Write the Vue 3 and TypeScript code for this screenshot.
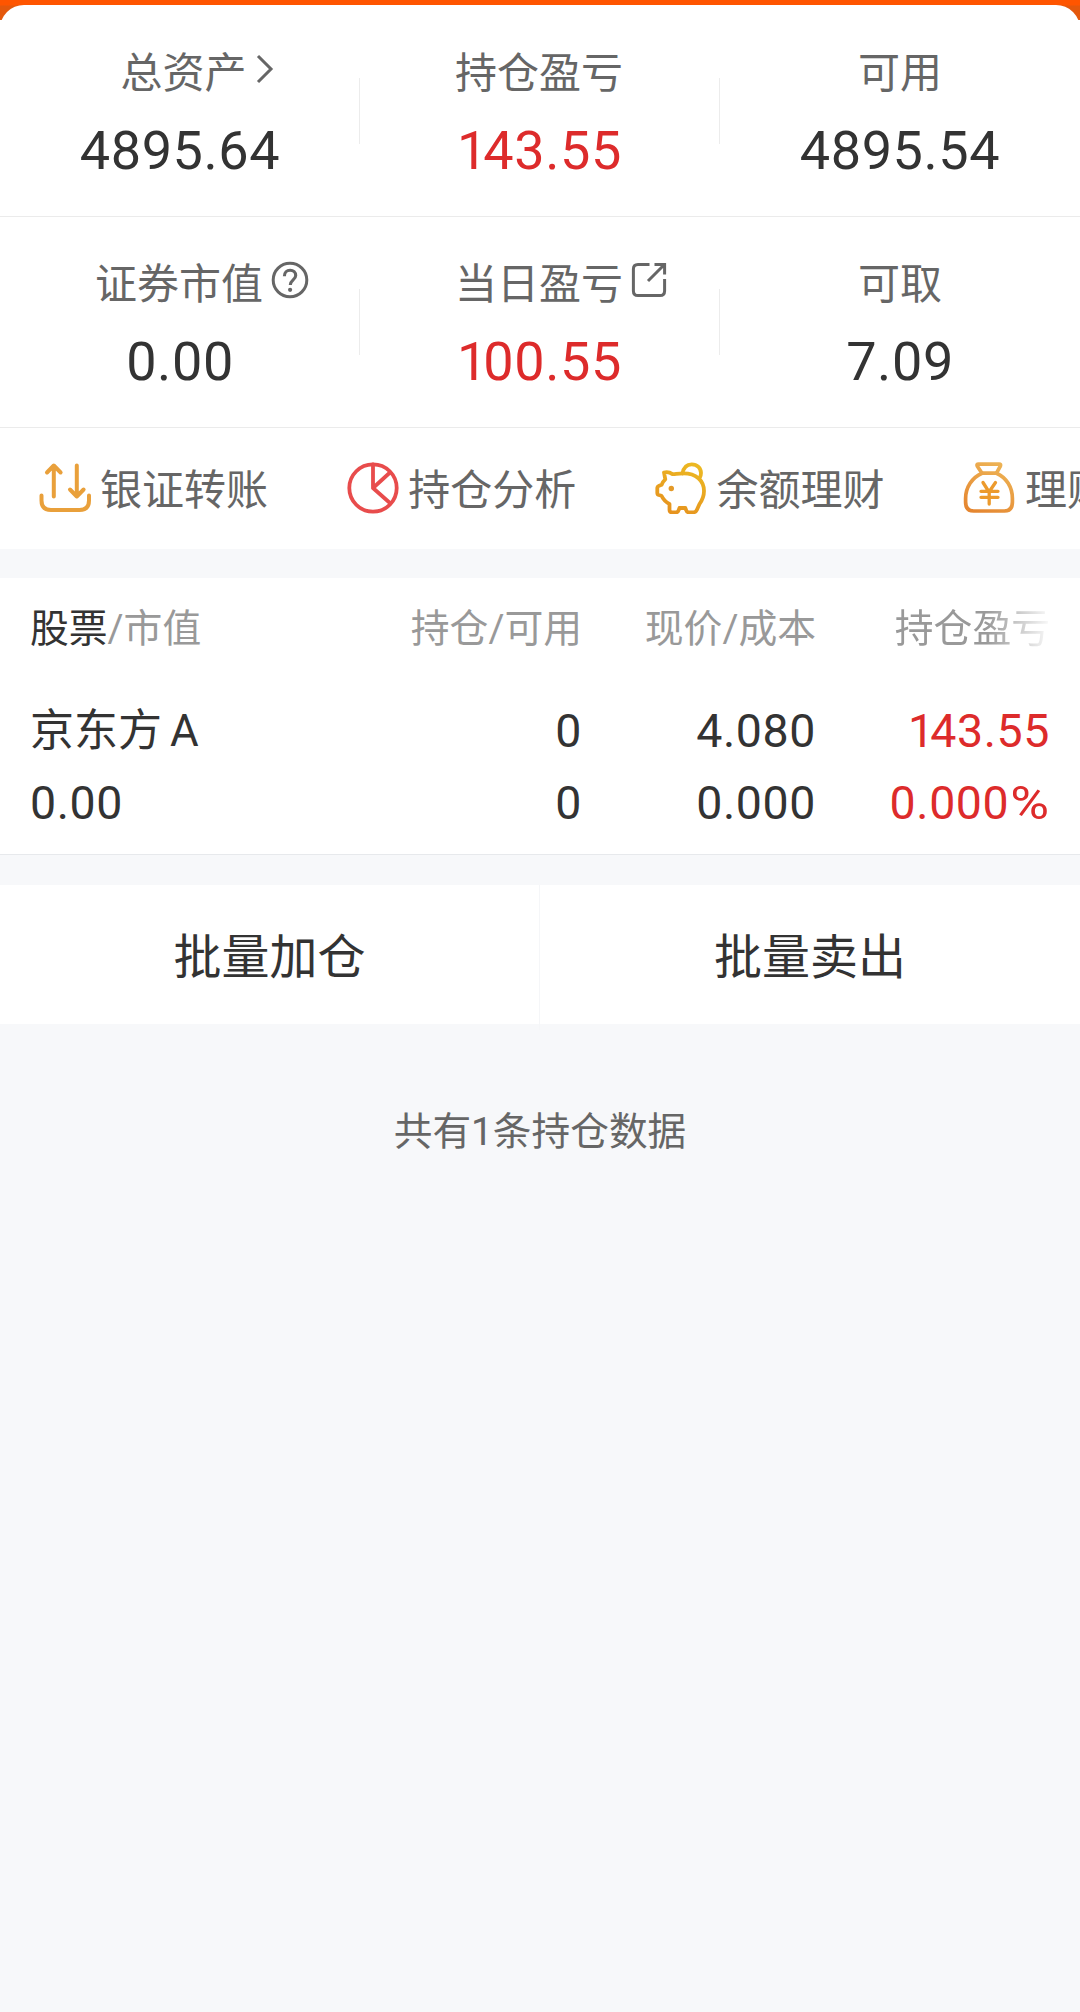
<script setup lang="ts">
interface Metric {
  label: string
  value: string
  up?: boolean
  icon?: 'arrow' | 'help' | 'open'
}

interface Action {
  label: string
  icon: 'transfer' | 'pie' | 'pig' | 'bag'
}

const metricRows: Metric[][] = [
  [
    { label: '总资产', value: '4895.64', icon: 'arrow' },
    { label: '持仓盈亏', value: '143.55', up: true },
    { label: '可用', value: '4895.54' },
  ],
  [
    { label: '证券市值', value: '0.00', icon: 'help' },
    { label: '当日盈亏', value: '100.55', up: true, icon: 'open' },
    { label: '可取', value: '7.09' },
  ],
]

const actions: Action[] = [
  { label: '银证转账', icon: 'transfer' },
  { label: '持仓分析', icon: 'pie' },
  { label: '余额理财', icon: 'pig' },
  { label: '理财', icon: 'bag' },
]

const holdings = [
  { name: '京东方 A', value: '0.00', held: '0', usable: '0', price: '4.080', cost: '0.000', profit: '143.55', rate: '0.000' },
]

// A leading 1 sits closer to the digit that follows
const isNarrow = (value: string): boolean => value.startsWith('1')
</script>

<template>
  <main class="page">
    <div class="top">
      <section class="card">
        <div v-for="(row, r) in metricRows" :key="r" class="metrics">
          <div v-for="m in row" :key="m.label" class="metric">
            <div class="metric-label" :class="{ shifted: m.icon === 'arrow' }">
              <span class="label-text">
                {{ m.label }}
                <svg v-if="m.icon === 'arrow'" class="ico-arrow" width="18" height="30" viewBox="0 0 18 30">
                  <path d="M2 2 15 15 2 28" />
                </svg>
                <svg v-else-if="m.icon === 'help'" class="ico-help" width="38" height="38" viewBox="0 0 38 38">
                  <circle cx="19" cy="19" r="16.8" />
                  <path d="M13.4 15.2c0-3.8 2.4-6 5.7-6s5.6 2.1 5.6 5.3c0 4.4-5.4 4.6-5.4 9.6" stroke-width="3.1" />
                  <circle class="dot" cx="19.1" cy="28.8" r="2.1" />
                </svg>
                <svg v-else-if="m.icon === 'open'" class="ico-open" width="36" height="36" viewBox="0 0 36 36">
                  <path d="M18.5 2.4H7Q2.4 2.4 2.4 7v22q0 4.6 4.6 4.6h22q4.6 0 4.6-4.6V17" />
                  <path d="M17 19 33.2 2.8M23.5 2.4h10.1v10.2" />
                </svg>
              </span>
            </div>
            <div class="metric-value" :class="{ up: m.up, narrow: isNarrow(m.value) }">{{ m.value }}</div>
          </div>
        </div>
      </section>
    </div>

    <nav class="actions">
      <div v-for="a in actions" :key="a.label" class="action">
        <svg v-if="a.icon === 'transfer'" class="a-ico" viewBox="0 0 52 52" stroke="#e9a03b" stroke-width="4">
          <path d="M2.5 33.5v5Q2.5 48 12 48h28.5q9.5 0 9.5-9.5v-5" />
          <path d="M14.8 34.5V4M8 10.500l6.800-7 6.800 7M37.800 3.500v31M31 27.500l6.800 7 6.800-7" />
        </svg>
        <svg v-else-if="a.icon === 'pie'" class="a-ico" viewBox="0 0 52 52" stroke="#e84c4c" stroke-width="3.800">
          <circle cx="26" cy="26" r="23.700" />
          <path d="M26 2.500V26L43 10.500M26 26l17.500 15.500" />
        </svg>
        <svg v-else-if="a.icon === 'pig'" class="a-ico left" viewBox="0 0 52 52" stroke="url(#gold)" stroke-width="3.800">
          <defs>
            <linearGradient id="gold" gradientUnits="userSpaceOnUse" x1="38" y1="2" x2="16" y2="50">
              <stop offset="0" stop-color="#ecb822" />
              <stop offset="1" stop-color="#e6931f" />
            </linearGradient>
          </defs>
          <path d="M27.500 11.500C28.500 5.500 32 2.300 36.700 2.300c5.500 0 9.300 4 9.300 8.700 0 2-.4 3.200-1.200 4.600" />
          <path d="M9 10.500c3-.9 5.500-.5 8.500 1.600 2.500.4 4.500-.8 11-.8C41 11.300 49 18.500 49 29c0 5.500-2 9.500-4.500 13l-2.700 6q-1 2.300-3.500 2.300h-4.500q-2 0-2.600-2l-.8-2.300h-6l-.8 2.300q-.6 2-2.600 2h-4q-2.500 0-2.500-2.500v-5.800C10.500 40 8 37 6.500 33.800L3.800 33Q2.300 32.500 2.300 31v-5.200q0-1.300 1.300-1.800l3-1.200c.8-2.300 2-4 3.700-5.500z" />
          <circle cx="16.300" cy="26.500" r="2.700" fill="#e49a28" stroke="none" />
        </svg>
        <svg v-else class="a-ico left" viewBox="0 0 52 52" stroke="url(#bag)" stroke-width="3.700">
          <defs>
            <linearGradient id="bag" gradientUnits="userSpaceOnUse" x1="36" y1="2" x2="12" y2="50">
              <stop offset="0" stop-color="#edb254" />
              <stop offset="1" stop-color="#e58630" />
            </linearGradient>
          </defs>
          <path d="M15.500 2.200h20.700q2 0 1.200 1.800l-3.900 7.200H19l-4.800-7.200q-.9-1.800 1.300-1.800z" />
          <path d="M19 11.200C9 15.500 2.600 25.500 2.600 36.500v3.500q0 9 8 9h30.800q8 0 8-9v-3.500C49.400 25.500 43.500 15.500 33.500 11.200" />
          <path d="M20 20.500l6 9.500 6.500-9.500M26.200 30v12M18 29.300h17M18 35.300h17" stroke="#ec9a2c" stroke-width="3.300" />
        </svg>
        <span>{{ a.label }}</span>
      </div>
    </nav>

    <section class="holdings">
      <div class="grid head">
        <div><b>股票</b>/市值</div>
        <div>持仓/可用</div>
        <div>现价/成本</div>
        <div class="fade">持仓盈亏</div>
      </div>
      <div v-for="h in holdings" :key="h.name" class="grid body">
        <div><p class="name">{{ h.name }}</p><p>{{ h.value }}</p></div>
        <div><p>{{ h.held }}</p><p>{{ h.usable }}</p></div>
        <div><p>{{ h.price }}</p><p>{{ h.cost }}</p></div>
        <div class="up"><p :class="{ narrow: isNarrow(h.profit) }">{{ h.profit }}</p><p>{{ h.rate }}<span class="percent">%</span></p></div>
      </div>
    </section>

    <section class="batch">
      <div class="batch-btn">批量加仓</div>
      <div class="batch-btn">批量卖出</div>
    </section>

    <p class="summary">共有{{ holdings.length }}条持仓数据</p>
  </main>
</template>

<style>
body {
  margin: 0;
  background: #f7f8fa;
}
</style>

<style scoped>
.page {
  width: 1080px;
  height: 2012px;
  overflow: hidden;
  background: #f7f8fa;
  color: #333;
  font-family: Roboto, "Noto Sans CJK SC", sans-serif;
}
p {
  margin: 0;
}
.up {
  color: #dd2b2b;
}
.top {
  padding-top: 5px;
  background: linear-gradient(#ff5500 0, #ff5500 5px, #e4580c 6px, #e4580c 20px, #fff 20px);
}
.card {
  padding-top: 1px;
  background: #fff;
  border-radius: 24px 24px 0 0;
}
.metrics {
  display: grid;
  grid-template-columns: repeat(3, 360px);
  height: 210px;
  border-bottom: 1px solid #ebebeb;
}
.metric {
  padding-top: 37px;
  text-align: center;
  background: linear-gradient(#ececec, #ececec) right 0 top 72px / 1px 66px no-repeat;
}
.metric:last-child {
  background: none;
}
.metric-label {
  height: 60px;
  padding-right: 2px;
  line-height: 61px;
  font-size: 42px;
  color: #666;
}
.metric:last-child .metric-label {
  padding-right: 0;
}
.metric-label.shifted {
  padding-left: 9px;
}
.label-text {
  position: relative;
  display: inline-block;
}
.label-text svg {
  position: absolute;
  left: 100%;
  fill: none;
  stroke: #666;
  stroke-width: 3;
}
.label-text .ico-arrow {
  top: 11px;
  margin-left: 9px;
}
.label-text .ico-help {
  top: 7px;
  margin-left: 8px;
}
.label-text .ico-open {
  top: 8px;
  margin-left: 8px;
}
.label-text .dot {
  fill: #666;
  stroke: none;
}
.metric-value {
  height: 60px;
  margin-top: 18px;
  line-height: 60px;
  font-size: 54px;
  letter-spacing: 0.6px;
}
.metric-value.narrow {
  padding-right: 1px;
}
.metric-value.narrow::first-letter {
  letter-spacing: -4px;
}
.actions {
  display: flex;
  height: 121px;
  overflow: hidden;
  background: #fff;
}
.action {
  flex: 0 0 308.300px;
  display: flex;
  align-items: center;
  box-sizing: border-box;
  padding-left: 39px;
  white-space: nowrap;
  font-size: 42px;
  line-height: 60px;
  color: #666;
}
.a-ico {
  flex: none;
  width: 52px;
  height: 52px;
  margin-right: 9px;
  margin-bottom: 2px;
  fill: none;
  stroke-linecap: round;
  stroke-linejoin: round;
}
.a-ico.left {
  margin-left: -1px;
  margin-right: 10px;
}
.action span {
  padding-top: 4px;
}
.holdings {
  box-sizing: border-box;
  height: 277px;
  margin-top: 29px;
  padding: 21px 30px 0;
  background: #fff;
  border-bottom: 1px solid #e7e9ec;
}
.grid {
  display: grid;
  grid-template-columns: 271px 281px 234px 234px;
}
.grid > div {
  text-align: right;
}
.grid > div:first-child {
  text-align: left;
}
.head {
  height: 60px;
  line-height: 60px;
  font-size: 38.800px;
  color: #999;
}
.head b {
  font-weight: 400;
  color: #333;
}
.head .fade {
  -webkit-mask-image: linear-gradient(to right, #000 170px, rgba(0, 0, 0, 0.05) 234px);
  mask-image: linear-gradient(to right, #000 170px, rgba(0, 0, 0, 0.05) 234px);
}
.body {
  padding-top: 36px;
}
.body p {
  height: 72px;
  line-height: 72px;
  font-size: 46.500px;
  letter-spacing: 0.6px;
}
.body p.narrow::first-letter {
  letter-spacing: -4px;
}
.body .name {
  font-size: 44px;
  letter-spacing: 0;
  word-spacing: -3px;
}
.percent {
  display: inline-block;
  margin-left: 6px;
  transform: scaleX(1.14);
  transform-origin: right center;
}
.batch {
  display: grid;
  grid-template-columns: 1fr 1fr;
  height: 139px;
  margin-top: 30px;
  background: #fff;
}
.batch-btn {
  text-align: center;
  line-height: 145px;
  font-size: 48px;
}
.batch-btn:first-child {
  border-right: 1px solid #f5f6f8;
}
.summary {
  margin-top: 78px;
  text-align: center;
  line-height: 60px;
  font-size: 38.700px;
  color: #666;
}
</style>
